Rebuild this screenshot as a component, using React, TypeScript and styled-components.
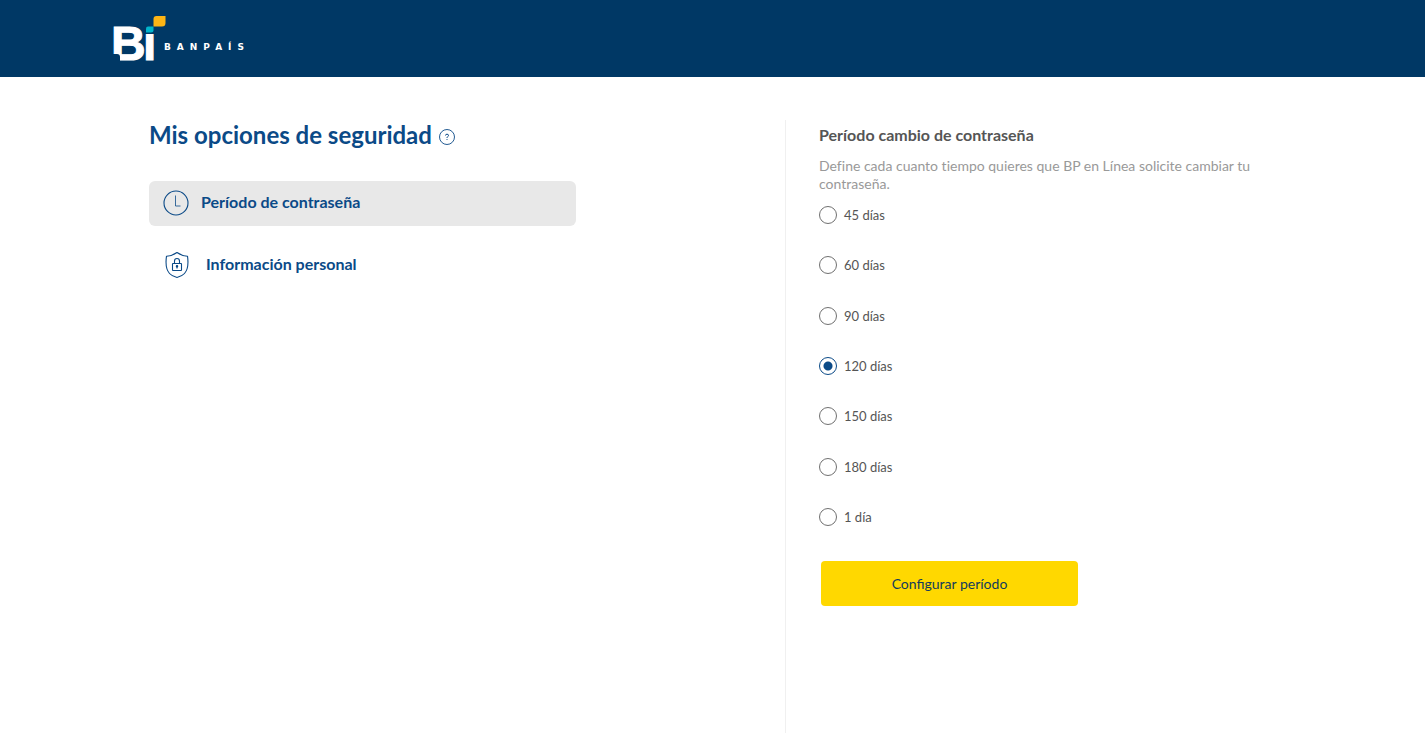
import { useState } from "react";
import styled, { createGlobalStyle } from "styled-components";

const GlobalStyle = createGlobalStyle`
  *, *::before, *::after { box-sizing: border-box; }
  body {
    margin: 0;
    background: #ffffff;
    font-family: Lato, "Open Sans", sans-serif;
    font-variant-ligatures: none;
  }
  h1, h2, p { margin: 0; }
`;

const Header = styled.header`
  height: 77px;
  padding: 0 109px;
  background: #003865;
`;

const HomeLink = styled.a`
  display: inline-block;
  svg { display: block; }
`;

const Main = styled.main`
  display: grid;
  grid-template-columns: minmax(0, 636fr) minmax(0, 491fr);
  min-height: calc(100vh - 77px);
  padding: 43px 149px 0;
`;

const Menu = styled.section`
  padding-right: 209px;
`;

const TitleRow = styled.div`
  display: flex;
  align-items: center;
  gap: 7px;
  height: 30px;
`;

const Title = styled.h1`
  color: #0b4a87;
  font-size: 24px;
  font-weight: 700;
  line-height: 30px;
  white-space: nowrap;
`;

const HelpButton = styled.button`
  display: flex;
  padding: 4px 0 0;
  border: 0;
  background: none;
  cursor: pointer;
`;

const Nav = styled.nav`
  display: flex;
  flex-direction: column;
  gap: 17px;
  margin-top: 31px;
`;

const NavItem = styled.a<{ $active?: boolean; $gap: number }>`
  display: flex;
  align-items: center;
  gap: ${(p) => p.$gap}px;
  height: 45px;
  padding: 0 14px 2px;
  border-radius: 6px;
  background: ${(p) => (p.$active ? "#e8e8e8" : "transparent")};
  color: #0b4a87;
  font-size: 16px;
  font-weight: 700;
  line-height: 20px;
  text-decoration: none;
  svg { flex: none; }
`;

const NavLabel = styled.span`
  padding-bottom: 2px;
`;

const Panel = styled.section`
  padding-left: 33px;
  border-left: 1px solid #f0f0f0;
`;

const PanelTitle = styled.h2`
  padding-top: 5px;
  color: #555555;
  font-size: 16px;
  font-weight: 700;
  line-height: 20px;
`;

const Description = styled.p`
  margin-top: 12px;
  color: #999999;
  font-size: 14px;
  line-height: 18px;
`;

const Options = styled.div`
  display: flex;
  flex-direction: column;
  justify-content: space-between;
  height: 320px;
  margin-top: 13px;
`;

const Option = styled.label`
  display: flex;
  align-items: center;
  gap: 7px;
  height: 18px;
  color: #555555;
  font-size: 13px;
  line-height: 18px;
  cursor: pointer;
`;

const Radio = styled.input`
  appearance: none;
  flex: none;
  width: 18px;
  height: 18px;
  margin: 0;
  border: 1px solid #707070;
  border-radius: 50%;
  background: #ffffff;
  &:checked {
    border-color: #0b4a87;
    background: radial-gradient(circle, #0b4a87 4px, #ffffff 5px);
  }
`;

const SubmitButton = styled.button`
  display: block;
  width: 257px;
  height: 45px;
  margin: 35px 0 0 2px;
  border: 0;
  border-radius: 4px;
  background: #ffd800;
  color: #123b5c;
  font-family: inherit;
  font-size: 14px;
  line-height: 18px;
  cursor: pointer;
`;

function Logo() {
  return (
    <svg width="144" height="77" viewBox="-4 -16 144 77" role="img" aria-label="Bi Banpaís">
      <g fill="#ffffff" stroke="#ffffff" strokeWidth="1" fontFamily="Liberation Sans, sans-serif" fontSize="48" fontWeight="700">
        <text x="-2" y="44">B</text>
        <text x="30" y="44">i</text>
      </g>
      <path d="M-1 38H4Q7 38 7 41V47H-1Z" fill="#003865" />
      <path d="M31 5H43V18H31Z" fill="#003865" />
      <path d="M35 10.500H40.500V14Q40.500 16.500 38 16.500H33V12.500Q33 10.500 35 10.500Z" fill="#00b5cc" />
      <path d="M43.500 0H52.500V7Q52.500 10.500 49 10.500H40.500V3Q40.500 0 43.500 0Z" fill="#fdb515" />
      <text x="51" y="34" fill="#ffffff" fontFamily="DejaVu Sans, sans-serif" fontSize="9" fontWeight="700" letterSpacing="6">BANPAÍS</text>
    </svg>
  );
}

function HelpIcon() {
  return (
    <svg width="16" height="16" viewBox="0 0 16 16" fill="none" stroke="#0b4a87" aria-hidden="true">
      <circle cx="8" cy="8" r="7.500" strokeWidth="0.900" />
      <path d="M6.500 6.500Q6.500 5.200 8 5.200Q9.500 5.200 9.500 6.500Q9.500 7.200 8.700 7.600Q8 8 8 9M8 10.100V11" />
    </svg>
  );
}

function ClockIcon() {
  return (
    <svg width="26" height="26" viewBox="0 0 26 26" fill="none" stroke="#0b4a87" aria-hidden="true">
      <circle cx="13" cy="13" r="12" strokeWidth="1.100" />
      <path d="M12.500 5.500V16H17.500" strokeWidth="0.800" />
    </svg>
  );
}

function ShieldIcon() {
  return (
    <svg width="28" height="28" viewBox="0 0 28 28" fill="none" stroke="#0b4a87" strokeWidth="1.100" strokeLinejoin="round" aria-hidden="true">
      <path d="M14 1.500C11 3.700 7 5 3.500 5.200C2.500 12 3 18.500 6.500 22.500C8.500 24.800 11.500 25.800 14 26.500C16.500 25.800 19.500 24.800 21.500 22.500C25 18.500 25.500 12 24.500 5.200C21 5 17 3.700 14 1.500Z" />
      <rect x="9.500" y="12.500" width="9" height="7" rx="0.500" />
      <path d="M11.500 12.500V10Q11.500 7.500 14 7.500Q16.500 7.500 16.500 10V12.500" />
      <circle cx="14" cy="15.300" r="0.700" fill="#0b4a87" />
      <path d="M14 15.500V17.500" />
    </svg>
  );
}

const periods = ["45 días", "60 días", "90 días", "120 días", "150 días", "180 días", "1 día"];

export default function App() {
  const [period, setPeriod] = useState("120 días");
  return (
    <>
      <GlobalStyle />
      <Header>
        <HomeLink href="#">
          <Logo />
        </HomeLink>
      </Header>
      <Main>
        <Menu>
          <TitleRow>
            <Title>Mis opciones de seguridad</Title>
            <HelpButton type="button" aria-label="Ayuda">
              <HelpIcon />
            </HelpButton>
          </TitleRow>
          <Nav>
            <NavItem href="#periodo" $active $gap={12}>
              <ClockIcon />
              <NavLabel>Período de contraseña</NavLabel>
            </NavItem>
            <NavItem href="#informacion" $gap={15}>
              <ShieldIcon />
              <NavLabel>Información personal</NavLabel>
            </NavItem>
          </Nav>
        </Menu>
        <Panel>
          <PanelTitle id="period-title">Período cambio de contraseña</PanelTitle>
          <Description>
            Define cada cuanto tiempo quieres que BP en Línea solicite cambiar tu contraseña.
          </Description>
          <Options role="radiogroup" aria-labelledby="period-title">
            {periods.map((p) => (
              <Option key={p}>
                <Radio type="radio" name="period" value={p} checked={period === p} onChange={() => setPeriod(p)} />
                {p}
              </Option>
            ))}
          </Options>
          <SubmitButton type="button">Configurar período</SubmitButton>
        </Panel>
      </Main>
    </>
  );
}
